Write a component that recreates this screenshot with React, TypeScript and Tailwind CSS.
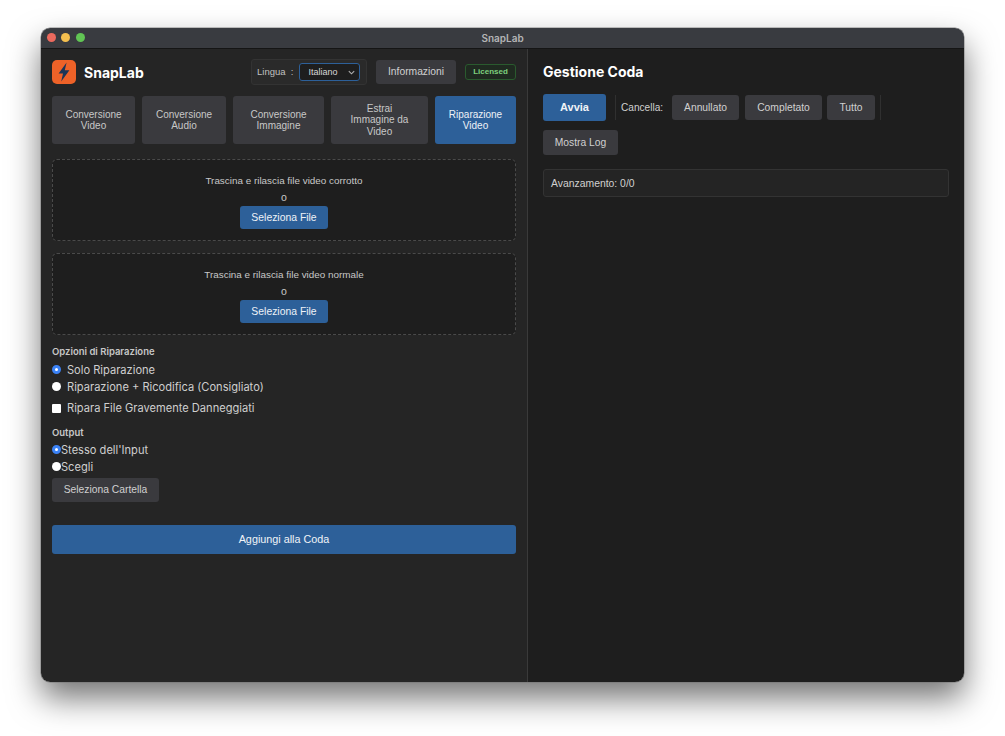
const tabs = [
  { label: 'Conversione Video', width: 'w-[83px] px-[12px]' },
  { label: 'Conversione Audio', width: 'w-[84px] px-[12px]' },
  { label: 'Conversione Immagine', width: 'w-[91px] px-[12px]' },
  { label: 'Estrai Immagine da Video', width: 'w-[97px] px-[18px]' },
  { label: 'Riparazione Video', width: 'w-[81px] px-[12px]', active: true },
];

const greyBtn = 'rounded-[3px] bg-[#3a3a3e] text-[10.3px] text-[#d0d0d0] flex items-center justify-center';
const inter = "font-['Inter',sans-serif]";

const Logo = () => (
  <div className="w-[24px] h-[24px] rounded-[5px] bg-[#ee6228] flex items-center justify-center">
    <svg width="14" height="20" viewBox="0 0 14 20">
      <path d="M9.6 .5 1.6 11.4h4.4L4.2 19.5 12.4 8.2H7.8z" fill="#1c3557" />
    </svg>
  </div>
);

const DropZone = ({ text }: { text: string }) => (
  <div className="h-[82px] rounded-[5px] border border-dashed border-[#4a4a4a] bg-[#1e1e1e] flex flex-col items-center pt-[14px]">
    <div className="text-[9.9px] leading-[14px] text-[#c8c8c8]">{text}</div>
    <div className="text-[10.5px] leading-[14px] text-[#c8c8c8] mt-[2px]">o</div>
    <button className="mt-[2px] w-[88px] h-[23px] rounded-[3px] bg-[#2d6099] text-[10.4px] text-[#eef2f7]">Seleziona File</button>
  </div>
);

const Radio = ({ checked }: { checked?: boolean }) => (
  <span className={checked ? 'block mb-[2px] w-[9px] h-[9px] rounded-full bg-white border-[3px] border-[#3b82f6] shrink-0' : 'block mb-[2px] w-[9px] h-[9px] rounded-full bg-white shrink-0'} />
);

const Divider = () => <div className="w-px h-[25px] bg-[#303030]" />;

export default function App() {
  return (
    <div className="w-[1005px] h-[736px] bg-white overflow-hidden pt-[28px] pl-[41px] font-['Liberation_Sans',Arial,sans-serif]">
      <div className="w-[923px] h-[654px] rounded-[9px] overflow-hidden flex flex-col shadow-[0_0_0_0.5px_rgba(110,110,110,0.8),0_16px_32px_rgba(0,0,0,0.55)]">
        <div className="relative h-[21px] shrink-0 bg-[#393b40] border-b border-[#151515] flex items-center justify-center">
          <div className="absolute left-[5.5px] top-[5px] flex gap-[5.5px]">
            <span className="w-[9px] h-[9px] rounded-full bg-[#ec6a5e]" />
            <span className="w-[9px] h-[9px] rounded-full bg-[#f4bf4f]" />
            <span className="w-[9px] h-[9px] rounded-full bg-[#61c554]" />
          </div>
          <span className={`${inter} text-[10px] font-semibold text-[#b4b4b6]`}>SnapLab</span>
        </div>
        <div className="flex-1 flex min-h-0">
          <div className="w-[487px] shrink-0 bg-[#252525] border-r border-[#3a3a3a] pl-[11px] pr-[11px] pt-[10px]">
            <div className="h-[26px] flex items-center">
              <Logo />
              <span className={`${inter} ml-[8px] text-[14px] font-bold text-white`}>SnapLab</span>
              <div className="ml-auto w-[116px] h-[26px] rounded-[3px] border border-[#333333] bg-[#2a2a2a] flex items-center pl-[5px]">
                <span className="text-[9.5px] text-[#c0c0c0] whitespace-pre">Lingua  :</span>
                <div className="ml-[6px] w-[61px] h-[18px] rounded-[3px] border border-[#2d6099] bg-[#1e1e1e] flex items-center pl-[8px] pr-[3px] pt-[1px] text-[9px] text-[#d8d8d8]">
                  Italiano
                  <svg className="ml-auto" width="9" height="9" viewBox="0 0 10 10" fill="none" stroke="#b0b0b0" strokeWidth="1.2">
                    <path d="M2 3.5 5 6.5 8 3.5" />
                  </svg>
                </div>
              </div>
              <button className={`${greyBtn} ml-[9px] w-[80px] h-[24px]`}>Informazioni</button>
              <div className="ml-[9px] w-[51px] h-[16px] rounded-[3px] border border-[#2a5a2e] bg-[#1f2a20] flex items-center justify-center text-[8px] font-bold text-[#7ed07e]">Licensed</div>
            </div>
            <div className="mt-[11px] flex gap-[7px]">
              {tabs.map((t) => (
                <button
                  key={t.label}
                  className={`${t.width} h-[48px] rounded-[3px] text-[10px] leading-[11.5px] ${t.active ? 'bg-[#2d6099] text-[#eef2f7]' : 'bg-[#3a3a3e] text-[#c8c8c8]'}`}
                >
                  {t.label}
                </button>
              ))}
            </div>
            <div className="mt-[15px] flex flex-col gap-[12px]">
              <DropZone text="Trascina e rilascia file video corrotto" />
              <DropZone text="Trascina e rilascia file video normale" />
            </div>
            <div className={`${inter} mt-[11px] text-[9.5px] leading-[12px] font-semibold text-[#c8c8c8]`}>Opzioni di Riparazione</div>
            <div className={`${inter} mt-[4px] flex flex-col text-[11.1px] text-[#cfcfcf]`}>
              <label className="h-[17px] flex items-center gap-[6px]"><Radio checked />Solo Riparazione</label>
              <label className="h-[17px] flex items-center gap-[6px]"><Radio />Riparazione + Ricodifica (Consigliato)</label>
              <label className="mt-[4px] h-[17px] flex items-center gap-[6px]"><span className="block w-[9px] h-[9px] bg-white rounded-[1px] shrink-0" />Ripara File Gravemente Danneggiati</label>
            </div>
            <div className={`${inter} mt-[10px] text-[9.5px] leading-[12px] font-semibold text-[#c8c8c8]`}>Output</div>
            <div className={`${inter} mt-[3px] flex flex-col text-[11.1px] text-[#cfcfcf]`}>
              <label className="h-[17px] flex items-center"><Radio checked />Stesso dell'Input</label>
              <label className="h-[17px] flex items-center"><Radio />Scegli</label>
            </div>
            <button className={`${greyBtn} mt-[2px] w-[107px] h-[24px]`}>Seleziona Cartella</button>
            <button className="mt-[23px] w-[464px] h-[29px] rounded-[3px] bg-[#2d6099] pb-[1px] text-[10.8px] text-[#f0f3f7]">Aggiungi alla Coda</button>
          </div>
          <div className="flex-1 bg-[#1e1e1e] pl-[15px] pr-[15px] pt-[13px]">
            <div className={`${inter} text-[14px] leading-[20px] font-bold text-white`}>Gestione Coda</div>
            <div className="mt-[12px] flex items-center h-[27px]">
              <button className="w-[63px] h-[27px] rounded-[3px] bg-[#2d6099] text-[11px] font-bold text-[#f0f3f7]">Avvia</button>
              <div className="ml-[9px]"><Divider /></div>
              <span className="ml-[5px] w-[42px] whitespace-nowrap text-[10.1px] text-[#d0d0d0]">Cancella:</span>
              <button className={`${greyBtn} ml-[9px] w-[67px] h-[25px]`}>Annullato</button>
              <button className={`${greyBtn} ml-[6px] w-[77px] h-[25px]`}>Completato</button>
              <button className={`${greyBtn} ml-[5px] w-[48px] h-[25px]`}>Tutto</button>
              <div className="ml-[5px]"><Divider /></div>
            </div>
            <button className={`${greyBtn} mt-[9px] w-[75px] h-[25px]`}>Mostra Log</button>
            <div className="mt-[14px] h-[28px] rounded-[3px] border border-[#333333] bg-[#242424] flex items-center pl-[7px] pt-[1px] text-[10.4px] text-[#d0d0d0]">Avanzamento: 0/0</div>
          </div>
        </div>
      </div>
    </div>
  );
}
